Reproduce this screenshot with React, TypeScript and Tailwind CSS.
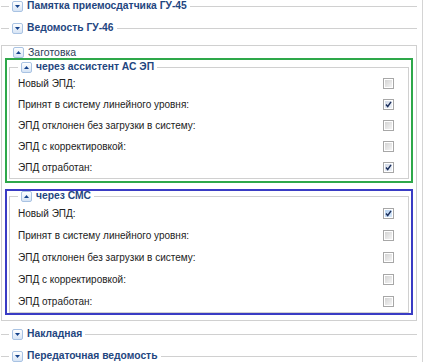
import React from "react";

type Row = { label: string; checked: boolean; active?: boolean };

const viaAssistant: Row[] = [
  { label: "Новый ЭПД:", checked: false },
  { label: "Принят в систему линейного уровня:", checked: true },
  { label: "ЭПД отклонен без загрузки в систему:", checked: false },
  { label: "ЭПД с корректировкой:", checked: false },
  { label: "ЭПД отработан:", checked: true },
];

const viaSms: Row[] = [
  { label: "Новый ЭПД:", checked: true, active: true },
  { label: "Принят в систему линейного уровня:", checked: false },
  { label: "ЭПД отклонен без загрузки в систему:", checked: false },
  { label: "ЭПД с корректировкой:", checked: false },
  { label: "ЭПД отработан:", checked: false },
];

function Toggle({ open }: { open: boolean }) {
  return (
    <span className="flex h-[11px] w-[11px] items-center justify-center rounded-[2px] border border-[#a9c3e3] bg-gradient-to-b from-[#ffffff] to-[#d6e4f5]">
      <svg width="5" height="3" viewBox="0 0 5 3">
        {open ? (
          <polygon points="0,3 5,3 2.5,0" fill="#15428b" />
        ) : (
          <polygon points="0,0 5,0 2.5,3" fill="#15428b" />
        )}
      </svg>
    </span>
  );
}

function Legend({ title, open, bold = true }: { title: string; open: boolean; bold?: boolean }) {
  return (
    <legend className="px-[3px]">
      <span className="flex h-[11px] items-center gap-[4px]">
        <Toggle open={open} />
        <span
          className={
            bold
              ? "text-[10.3px] font-bold leading-none text-[#1f4680]"
              : "text-[10.5px] leading-none text-[#2c3d58]"
          }
        >
          {title}
        </span>
      </span>
    </legend>
  );
}

function Collapsed({ title, className = "" }: { title: string; className?: string }) {
  return (
    <fieldset className={`ml-[1px] mr-[5px] border-t border-[#d0d0d0] px-[8px] ${className}`}>
      <Legend title={title} open={false} />
    </fieldset>
  );
}

function Checkbox({ checked, active }: { checked: boolean; active?: boolean }) {
  const fill = active
    ? "from-[#b7d3f2] to-[#d9e9fa]"
    : checked
      ? "from-[#d3dbe8] to-[#eef2f8]"
      : "from-[#d4d4d4] to-[#f4f4f4]";
  return (
    <span className="flex h-[11px] w-[11px] items-center justify-center border border-[#a7a7a7] bg-white p-[1px]">
      <span className={`flex h-full w-full items-center justify-center bg-gradient-to-br ${fill}`}>
        {checked && (
          <svg width="7" height="7" viewBox="0 0 7 7">
            <path d="M1 3.6 L2.7 5.6 L6 0.8" fill="none" stroke="#1c2f5c" strokeWidth="1.5" />
          </svg>
        )}
      </span>
    </span>
  );
}

function Group({
  title,
  rows,
  frame,
  rowH,
  top,
  bottom,
}: {
  title: string;
  rows: Row[];
  frame: string;
  rowH: string;
  top: string;
  bottom: string;
}) {
  return (
    <div className={`border-2 px-[2px] ${frame} ${top} ${bottom}`}>
      <fieldset className="border border-[#d0d0d0] px-[8px]">
        <Legend title={title} open />
        {rows.map((r) => (
          <div key={r.label} className={`flex items-center justify-between pr-[6px] ${rowH}`}>
            <span className="text-[10px] text-[#222222]">{r.label}</span>
            <Checkbox checked={r.checked} active={r.active} />
          </div>
        ))}
      </fieldset>
    </div>
  );
}

export default function App() {
  return (
    <div className="h-[362px] w-[428px] overflow-hidden bg-white font-['Liberation_Sans',Arial,sans-serif]">
      <div className="h-full w-[423px] border-r border-[#d4d4d4] pt-[1px]">
        <Collapsed title="Памятка приемосдатчика ГУ-45" className="mb-[11px]" />
        <Collapsed title="Ведомость ГУ-46" className="mb-[11px]" />

        <fieldset className="ml-[1px] mr-[5px] border border-[#d0d0d0] px-[3px] pb-[5px] pt-[1px]">
          <div className="pl-[5px]">
            <Legend title="Заготовка" open bold={false} />
          </div>
          <Group
            title="через ассистент АС ЭП"
            rows={viaAssistant}
            frame="border-[#2ea84a]"
            rowH="h-[21px]"
            top="pt-[2px]"
            bottom="pb-[2px]"
          />
          <div className="mt-[6px]">
            <Group
              title="через СМС"
              rows={viaSms}
              frame="border-[#3a3cc4]"
              rowH="h-[22px]"
              top="pt-0"
              bottom="pb-0"
            />
          </div>
        </fieldset>

        <Collapsed title="Накладная" className="mb-[11px] mt-[8px]" />
        <Collapsed title="Передаточная ведомость" />
      </div>
    </div>
  );
}
